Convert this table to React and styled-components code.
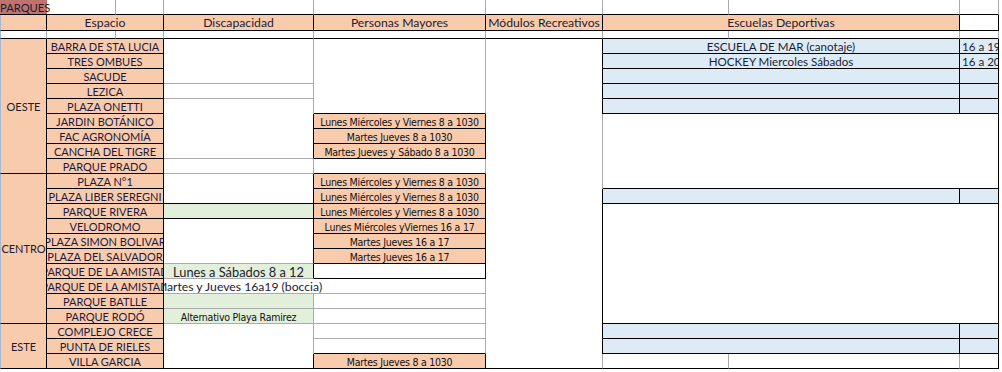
import React from "react";
import styled, { createGlobalStyle } from "styled-components";

const Global = createGlobalStyle`
  html, body { margin: 0; padding: 0; background: #ffffff; }
  body { font-family: Lato, "Liberation Sans", sans-serif; }
`;

const PEACH = "#f8cbad";
const BLUE = "#ddebf7";
const GREEN = "#e2efda";
const RED = "#c0736e";
const GRAY = "#ababab";
const BLACK = "#000000";
const EDGE = "#a9bad3";

const Sheet = styled.div`
  display: grid;
  grid-template-columns: 47px 69px 48px 150px 172px 117px 126px 231px 39px 3px;
  grid-template-rows: 15px 16px 8px repeat(22, 15px);
  width: 1002px;
  overflow: hidden;
  color: #1c1c30;
`;

const GridCell = styled.div`
  box-sizing: border-box;
  grid-column: ${(p) => p.$c} / span ${(p) => p.$cs || 1};
  grid-row: ${(p) => p.$r} / span ${(p) => p.$rs || 1};
  background: ${(p) => p.$bg || "#ffffff"};
  border-right: ${(p) => (p.$rb ? `1px solid ${p.$rb}` : "none")};
  border-bottom: ${(p) => (p.$bb ? `1px solid ${p.$bb}` : "none")};
  border-left: ${(p) => (p.$edge ? `1px solid ${EDGE}` : "none")};
  display: flex;
  align-items: center;
  justify-content: ${(p) => p.$align || "center"};
  white-space: nowrap;
  overflow: hidden;
  font-size: 11px;
  line-height: 14px;
  min-width: 0;
  padding-top: 1px;
`;

const TitleCell = styled(GridCell)`
  overflow: visible;
  position: relative;
  z-index: 2;
  justify-content: flex-start;
  padding-left: 0;
  font-size: 11.2px;
`;

const HeaderCell = styled(GridCell)`
  font-size: 12.2px;
`;

const ZoneCell = styled(GridCell)`
  font-size: 11px;
`;

const SpaceCell = styled(GridCell)`
  font-size: 11px;
  color: #1d1a3c;
`;

const NoteCell = styled(GridCell)`
  font-size: 12.8px;
`;

const SpillCell = styled(GridCell)`
  overflow: visible;
  position: relative;
  z-index: 2;
  clip-path: inset(0 -60px 0 0);
  background: transparent;
  font-size: 12.2px;
`;

const ScheduleCell = styled(GridCell)`
  font-family: "DejaVu Sans Condensed", "Liberation Sans", sans-serif;
  font-size: 10.5px;
  letter-spacing: -0.25px;
  color: #111111;
`;

const SchoolCell = styled(GridCell)`
  font-size: 11.6px;
`;

const HoursCell = styled(GridCell)`
  justify-content: flex-start;
  padding-left: 2px;
  font-size: 11.6px;
`;

const spaces = [
  "BARRA DE STA LUCIA",
  "TRES OMBUES",
  "SACUDE",
  "LEZICA",
  "PLAZA ONETTI",
  "JARDIN BOTÁNICO",
  "FAC AGRONOMÍA",
  "CANCHA DEL TIGRE",
  "PARQUE PRADO",
  "PLAZA N°1",
  "PLAZA LIBER SEREGNI",
  "PARQUE RIVERA",
  "VELODROMO",
  "PLAZA SIMON BOLIVAR",
  "PLAZA DEL SALVADOR",
  "PARQUE DE LA AMISTAD",
  "PARQUE DE LA AMISTAD",
  "PARQUE BATLLE",
  "PARQUE RODÓ",
  "COMPLEJO CRECE",
  "PUNTA DE RIELES",
  "VILLA GARCIA",
];

const zones = [
  { name: "OESTE", from: 0, span: 9 },
  { name: "CENTRO", from: 9, span: 10 },
  { name: "ESTE", from: 19, span: 3 },
];

// data row index -> grid row line
const R = (i) => 4 + i;

const mayores = [
  { row: 5, text: "Lunes Miércoles y Viernes 8 a 1030" },
  { row: 6, text: "Martes Jueves 8 a 1030" },
  { row: 7, text: "Martes Jueves y Sábado 8 a 1030" },
  { row: 9, text: "Lunes Miércoles y Viernes 8 a 1030" },
  { row: 10, text: "Lunes Miércoles y Viernes 8 a 1030" },
  { row: 11, text: "Lunes Miércoles y Viernes 8 a 1030" },
  { row: 12, text: "Lunes Miércoles yViernes 16 a 17" },
  { row: 13, text: "Martes Jueves 16 a 17" },
  { row: 14, text: "Martes Jueves 16 a 17" },
  { row: 21, text: "Martes Jueves 8 a 1030" },
];

const escuelas = [
  { row: 0, text: "ESCUELA DE MAR (canotaje)", hours: "16 a 19" },
  { row: 1, text: "HOCKEY Miercoles Sábados", hours: "16 a 20" },
  { row: 2, text: "", hours: "" },
  { row: 3, text: "", hours: "" },
  { row: 4, text: "", hours: "" },
  { row: 10, text: "", hours: "" },
  { row: 19, text: "", hours: "" },
  { row: 20, text: "", hours: "" },
];

export default function App() {
  return (
    <>
      <Global />
      <Sheet>
        {/* Row 0: title */}
        <TitleCell $c={1} $r={1} $bg={RED} $bb={BLACK}>PARQUES</TitleCell>
        {[2, 3, 4, 5, 6, 7, 8, 9].map((c) => (
          <GridCell key={`t${c}`} $c={c} $r={1} $rb={GRAY} $bb={BLACK} />
        ))}

        {/* Row 1: headers */}
        <HeaderCell $c={1} $r={2} $bg={PEACH} $rb={BLACK} $bb={BLACK} $edge />
        <HeaderCell $c={2} $cs={2} $r={2} $bg={PEACH} $rb={BLACK} $bb={BLACK}>Espacio</HeaderCell>
        <HeaderCell $c={4} $r={2} $bg={PEACH} $rb={BLACK} $bb={BLACK}>Discapacidad</HeaderCell>
        <HeaderCell $c={5} $r={2} $bg={PEACH} $rb={BLACK} $bb={BLACK}>Personas Mayores</HeaderCell>
        <HeaderCell $c={6} $r={2} $bg={PEACH} $rb={BLACK} $bb={BLACK}>Módulos Recreativos</HeaderCell>
        <HeaderCell $c={7} $cs={2} $r={2} $bg={PEACH} $rb={BLACK} $bb={BLACK}>Escuelas Deportivas</HeaderCell>
        <HeaderCell $c={9} $r={2} $rb={BLACK} $bb={BLACK} />

        {/* Row 2: spacer */}
        {[1, 2, 3, 4, 5, 6, 7, 8, 9].map((c) => (
          <GridCell key={`s${c}`} $c={c} $r={3} $rb={GRAY} $bb={BLACK} $edge={c === 1} />
        ))}

        {/* Zones */}
        {zones.map((z) => (
          <ZoneCell key={z.name} $c={1} $r={R(z.from)} $rs={z.span} $bg={PEACH} $rb={BLACK} $bb={BLACK} $edge>
            {z.name}
          </ZoneCell>
        ))}

        {/* Espacio */}
        {spaces.map((s, i) => (
          <SpaceCell key={`e${i}`} $c={2} $cs={2} $r={R(i)} $bg={PEACH} $rb={BLACK} $bb={BLACK}>
            {s}
          </SpaceCell>
        ))}

        {/* Discapacidad */}
        <GridCell $c={4} $r={R(0)} $rs={3} $rb={GRAY} $bb={GRAY} />
        <GridCell $c={4} $r={R(3)} $rb={GRAY} $bb={GRAY} />
        <GridCell $c={4} $r={R(4)} $rb={GRAY} />
        <GridCell $c={4} $r={R(5)} $rs={3} $rb={BLACK} $bb={GRAY} />
        <GridCell $c={4} $r={R(8)} $rb={GRAY} $bb={GRAY} />
        <GridCell $c={4} $r={R(9)} $rs={2} $rb={BLACK} $bb={BLACK} />
        <GridCell $c={4} $r={R(11)} $bg={GREEN} $rb={BLACK} $bb={BLACK} />
        <GridCell $c={4} $r={R(12)} $rs={3} $rb={BLACK} $bb={GRAY} />
        <NoteCell $c={4} $r={R(15)} $bg={GREEN} $rb={BLACK} $bb={GRAY}>Lunes a Sábados 8 a 12</NoteCell>
        <SpillCell $c={4} $r={R(16)} $bb={GRAY}>Martes y Jueves 16a19 (boccia)</SpillCell>
        <GridCell $c={4} $r={R(17)} $bg={GREEN} $rb={GRAY} $bb={GRAY} />
        <ScheduleCell $c={4} $r={R(18)} $bg={GREEN} $rb={GRAY} $bb={GRAY}>Alternativo Playa Ramirez</ScheduleCell>
        <GridCell $c={4} $r={R(19)} $rs={2} $rb={GRAY} />
        <GridCell $c={4} $r={R(21)} $rb={BLACK} $bb={BLACK} />

        {/* Personas Mayores */}
        <GridCell $c={5} $r={R(0)} $rs={5} $rb={GRAY} $bb={BLACK} />
        <GridCell $c={5} $r={R(8)} $rb={GRAY} $bb={BLACK} />
        <GridCell $c={5} $r={R(15)} $rb={BLACK} $bb={BLACK} />
        {[16, 17, 18, 19].map((i) => (
          <GridCell key={`pm${i}`} $c={5} $r={R(i)} $rb={GRAY} $bb={GRAY} />
        ))}
        <GridCell $c={5} $r={R(20)} $rb={GRAY} $bb={BLACK} />
        {mayores.map((m) => (
          <ScheduleCell key={`m${m.row}`} $c={5} $r={R(m.row)} $bg={PEACH} $rb={BLACK} $bb={BLACK}>
            {m.text}
          </ScheduleCell>
        ))}

        {/* Módulos Recreativos */}
        <GridCell $c={6} $r={R(0)} $rs={5} $rb={BLACK} />
        <GridCell $c={6} $r={R(5)} $rs={5} $rb={GRAY} />
        <GridCell $c={6} $r={R(10)} $rs={11} $rb={BLACK} />
        <GridCell $c={6} $r={R(21)} $rb={GRAY} $bb={BLACK} />

        {/* Escuelas Deportivas */}
        {escuelas.map((e) => (
          <React.Fragment key={`d${e.row}`}>
            <SchoolCell $c={7} $cs={2} $r={R(e.row)} $bg={BLUE} $rb={BLACK} $bb={BLACK}>
              {e.text}
            </SchoolCell>
            <HoursCell $c={9} $r={R(e.row)} $bg={BLUE} $rb={BLACK} $bb={BLACK}>
              {e.hours}
            </HoursCell>
          </React.Fragment>
        ))}
        <GridCell $c={7} $cs={3} $r={R(5)} $rs={5} $rb={BLACK} $bb={BLACK} />
        <GridCell $c={7} $cs={3} $r={R(11)} $rs={8} $rb={BLACK} $bb={BLACK} />
        <GridCell $c={7} $r={R(21)} $rb={GRAY} $bb={BLACK} />
        <GridCell $c={8} $r={R(21)} $rb={GRAY} $bb={BLACK} />
        <GridCell $c={9} $r={R(21)} $rb={BLACK} $bb={BLACK} />
      </Sheet>
    </>
  );
}
